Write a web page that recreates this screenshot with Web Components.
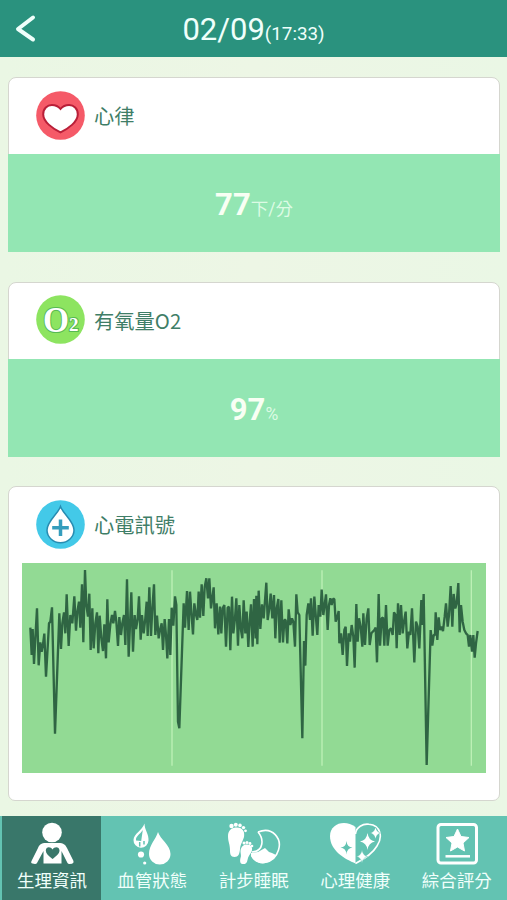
<!DOCTYPE html>
<html lang="zh-Hant">
<head>
<meta charset="utf-8">
<title>生理資訊</title>
<style>
	body {
		margin: 0;
		background: #ebf6e5;
		font-family: Roboto, "Noto Sans CJK TC", sans-serif;
	}
</style>
</head>
<body>
<health-app>
	<top-bar slot="top" date="02/09" time="(17:33)"></top-bar>
	<info-card label="心律">
		<health-icon slot="icon" name="heart"></health-icon>
		<value-panel value="77" unit="下/分"></value-panel>
	</info-card>
	<info-card label="有氧量O2">
		<health-icon slot="icon" name="oxygen"></health-icon>
		<value-panel value="97" unit="%"></value-panel>
	</info-card>
	<info-card label="心電訊號">
		<health-icon slot="icon" name="drop"></health-icon>
		<ecg-chart></ecg-chart>
	</info-card>
	<tab-bar slot="bottom">
		<tab-item label="生理資訊" icon="body" active></tab-item>
		<tab-item label="血管狀態" icon="blood"></tab-item>
		<tab-item label="計步睡眠" icon="sleep"></tab-item>
		<tab-item label="心理健康" icon="mind"></tab-item>
		<tab-item label="綜合評分" icon="score"></tab-item>
	</tab-bar>
</health-app>

<script>
const ICONS = {
	heart: `<svg viewBox="0 0 49 49">
		<circle cx="24.5" cy="24.5" r="24.3" fill="#f55a68"/>
		<path d="M24.5 41.3C17 37.8 7.2 31 7.2 23.2C7.2 17.4 11.3 14 15.9 14C19.5 14 22.5 15.5 24.5 18C26.5 15.5 29.5 14 33.1 14C37.7 14 41.8 17.4 41.8 23.2C41.8 31 32 37.8 24.5 41.3Z" fill="#fff" stroke="#b91f38" stroke-width="2"/>
	</svg>`,
	oxygen: `<svg viewBox="0 0 49 49">
		<circle cx="24.5" cy="24.5" r="24.3" fill="#8de460"/>
		<g font-family="Liberation Serif, serif" font-weight="bold" fill="#fff" stroke="#57b953" stroke-width="2" paint-order="stroke">
			<text x="7" y="36.5" font-size="35" textLength="26" lengthAdjust="spacingAndGlyphs">O</text>
			<text x="33" y="36" font-size="18" textLength="9.5" lengthAdjust="spacingAndGlyphs">2</text>
		</g>
	</svg>`,
	drop: `<svg viewBox="0 0 49 49">
		<circle cx="24.5" cy="24.5" r="24.3" fill="#43c9e8"/>
		<path d="M24.5 6.5C22 14 11 21 11 30A13.5 12.7 0 0 0 38 30C38 21 27 14 24.5 6.5Z" fill="#fff" stroke="#278cb1" stroke-width="1.5"/>
		<path d="M24.5 19.5V36M16.2 27.7H32.8" stroke="#349dbd" stroke-width="3.5"/>
	</svg>`,
	body: `<svg viewBox="0 0 54 44">
		<circle cx="27" cy="10.5" r="9.8"/>
		<path d="M21 21H33C39 21 40.5 23 42 26L48.5 39Q49 41 47 41.8L44.5 42Q43 42 42.5 41L36.5 29V41.5H18.5V29L12 41Q11.5 42 10 42L7.5 41.5Q5.5 41 6.5 39L13 26C14.5 22.5 16 21 21 21Z"/>
		<path d="M27.5 37C23.5 34 20.8 31.5 20.8 28.5C20.8 24.5 25.5 24 27.5 27.5C29.5 24 34.5 24.5 34.5 28.5C34.5 31.5 31.5 34 27.5 37Z" fill="#39776a"/>
	</svg>`,
	blood: `<svg viewBox="0 0 54 44">
		<path d="M33 10C35 17 45.5 23 45.5 32A10.7 10.5 0 0 1 24 32C24 23 31 17 33 10Z"/>
		<path d="M19.5 1.5C19.5 8 24 12 23.5 18.5A7.5 7.5 0 0 1 8.5 18C8.5 12 17.5 8 19.5 1.5Z"/>
		<path d="M17.8 8C15 12.5 10.5 14 11 18.5L16.2 19Z" fill="#63c3b2"/>
		<path d="M14.7 20V24.5M19 19V22.5" stroke="#63c3b2" stroke-width="1.5" fill="none"/>
		<circle cx="16" cy="32.5" r="3.1"/><circle cx="19.7" cy="41" r="1.6"/>
	</svg>`,
	sleep: `<svg viewBox="0 0 54 44">
		<path d="M1 14C1 8 5 5.5 10 5.5C16 5.5 18 10 17 15C15.5 20 13.5 22 13 27C12.5 32 11.5 35 7.5 35C3.5 35 3 32 3 28C3 22 1 20 1 14Z"/>
		<circle cx="4.5" cy="4" r="2.2"/><circle cx="8.8" cy="2.7" r="2"/><circle cx="13" cy="3.4" r="1.8"/><circle cx="16.5" cy="5.6" r="1.7"/><circle cx="18.5" cy="8.8" r="1.4"/>
		<path d="M13.5 29C14 24 17 22.500 20 22.500C24.500 22.500 26 26 24.500 30C23 32.500 21 34 20.500 38C20 41.500 17.500 42.500 15.500 42C12.500 41.500 13 38 13.500 36C14.500 33.500 13.500 32 13.500 29Z"/>
		<circle cx="17" cy="21" r="1.500"/><circle cx="20" cy="20.500" r="1.500"/><circle cx="23" cy="21.500" r="1.400"/><circle cx="25" cy="24" r="1.300"/>
		<path d="M31 10C46 4 55 17 51.500 28C47 43 29 44 24.500 33" fill="none" stroke="#fff" stroke-width="1.600"/>
		<path d="M31 10C37 17 37 29 25 30" fill="none" stroke="#fff" stroke-width="1.600"/>
		<path d="M24 31L31 30L38 26L42 30L45 31L49 33C43 44 29 44 24 34Z"/>
	</svg>`,
	mind: `<svg viewBox="0 0 54 44">
		<path d="M27.500 5V41.500C17 37 2 29 2 14C2 1.500 17 -3 27.500 5Z"/>
		<path d="M27.500 12C28 5 35 1.500 41 2.300C53 3.500 55 15 49 24C45 31 38 36 27.500 41.500" fill="none" stroke="#fff" stroke-width="1.600"/>
		<path d="M18.500 19Q19 25 24.500 25.500Q19 26 18.500 32.500Q18 26 12.500 25.500Q18 25 18.500 19Z" fill="#63c3b2"/>
		<path d="M39.500 11Q40.500 18.500 47 19.500Q40.500 20.500 39.500 28Q38.500 20.500 32 19.500Q38.500 18.500 39.500 11Z"/>
		<path d="M47.500 5Q48.500 10 52.500 11Q48.500 12 47.500 17Q46.500 12 42.500 11Q46.500 10 47.500 5Z" stroke="#63c3b2" stroke-width=".5"/>
		<path d="M34 28Q35 33.500 39.500 34.500Q35 35.500 34 41Q33 35.500 28.500 34.500Q33 33.500 34 28Z" stroke="#63c3b2" stroke-width=".5"/>
	</svg>`,
	score: `<svg viewBox="0 0 54 44">
		<rect x="8" y="2.500" width="38.500" height="38.500" rx="3" fill="none" stroke="#fff" stroke-width="3"/>
		<path d="M27.500 7L31 14.500L39 15.500L33 21L34.500 29L27.500 25L20.500 29L22 21L16 15.500L24 14.500Z" stroke="#fff" stroke-linejoin="round"/>
		<path d="M15.500 34.300H40" stroke="#fff" stroke-width="2.500"/>
	</svg>`,
};

// Each trace: x offset, then x,y pairs
const TRACES = [
	[0, "46,218 50,300 53,222 57,327 61,250 66,160 71,331 76,262 80,290 84,268 88,236 93,365 99,260 102,205 106,200 111,157 120,536 133,175 138,282 142,205 147,172 151,235 155,118 161,273 166,180 172,205 178,124 183,227 187,170 192,140 196,218 201,88 205,262 210,45 214,150 219,185 223,116 227,285 232,160 236,280 241,205 246,172 250,295 254,182 259,250 264,288 268,208 273,310 277,133 281,262 286,208 291,180 295,205 300,168 304,200 309,273 313,186 318,240 322,205 327,180 331,270 336,73 341,305 349,112 354,290 359,180 363,222 368,192 372,124 377,254 381,180 386,235 391,190 395,140 398,243 403,97 408,243 412,160 417,88 421,240 426,182 431,250 435,225 440,205 444,285 449,192 453,240 457,310 462,192 466,300 470,158 475,212"],
	[450, "30,124 34,150 39,500 43,520 56,145 60,218 66,108 71,225 75,110 79,170 84,238 88,145 93,180 97,195 101,110 105,188 110,88 115,183 119,97 124,70 129,130 133,70 138,160 146,97 150,220 155,145 160,238 165,155 169,235 173,160 178,150 183,275 188,158 192,155 196,286 201,125 205,235 210,190 214,130 219,272 223,150 228,225 232,250 236,136 241,235 245,170 250,276 254,200 258,148 263,275 267,132 272,250 274,122 277,268 281,107 286,222 291,148 296,190 304,83 308,195 313,160 317,116 322,190 327,120 331,250 335,160 340,132 344,263 349,136 354,262 358,195 362,195 367,265 371,163 376,210 381,190 385,200 390,275 394,118 398,172 403,180 412,550 417,258 421,332 425,180 430,145 435,195 438,130 443,242 448,125 453,190 457,240 461,150 466,185 470,104 475,180"],
	[930, "3,118 8,225 12,150 16,130 20,150 24,132 28,132 32,200 37,185 41,168 43,265 48,235 53,300 58,225 62,215 66,333 71,235 75,260 80,210 85,245 89,338 94,147 98,260 102,190 107,215 112,275 115,175 120,270 125,190 130,160 134,270 139,235 148,225 152,218 156,322 161,117 165,272 170,190 174,188 178,272 183,150 188,272 193,225 198,220 203,240 207,172 212,180 215,280 219,145 224,240 228,150 233,235 237,200 242,170 247,280 252,230 256,240 261,160 268,322 273,200 278,215 283,280 289,135 292,210 296,117 305,630 317,225 322,272 326,240 330,240 332,172 337,255 341,187 345,225 349,215 354,228 359,185 363,145 368,215 372,180 377,93 382,215 386,117 391,160 395,145 400,84 404,232 408,150 413,200 418,225 423,235 428,240 432,275 436,240 441,290 445,240 449,308 453,265 458,228"],
];

class BaseElement extends HTMLElement {
	constructor() {
		super();
		this.attachShadow({ mode: "open" });
	}

	connectedCallback() {
		this.shadowRoot.innerHTML = this.template();
	}

	attr(name) {
		return this.getAttribute(name) ?? "";
	}
}

class HealthApp extends BaseElement {
	template() {
		return `<style>
			:host {
				display: flex;
				flex-direction: column;
				height: 900px;
				overflow: hidden;
				background: linear-gradient(90deg, #eaf7e4, #edf6e5 50%, #eaf7e5);
			}
			main {
				flex: 1;
				min-height: 0;
				display: flex;
				flex-direction: column;
				gap: 29.5px;
				padding: 20px 7px 0 8px;
			}
		</style>
		<slot name="top"></slot>
		<main><slot></slot></main>
		<slot name="bottom"></slot>`;
	}
}

class TopBar extends BaseElement {
	template() {
		return `<style>
			:host {
				display: grid;
				grid-template-columns: 50px 1fr 50px;
				align-items: center;
				height: 57px;
				background: #2a927e;
				color: #effffb;
			}
			svg {
				width: 24px;
				height: 30px;
				margin-left: 14px;
			}
			h1 {
				margin: 0;
				padding-top: 6px;
				text-align: center;
				font-size: 31px;
				line-height: 36px;
				font-weight: 400;
				white-space: nowrap;
			}
			small {
				font-size: 18.8px;
			}
		</style>
		<svg viewBox="0 0 24 30"><path d="M19 3.5L4 15L19 25.5" fill="none" stroke="currentColor" stroke-width="4" stroke-linecap="round" stroke-linejoin="round"/></svg>
		<h1>${this.attr("date")}<small>${this.attr("time")}</small></h1>`;
	}
}

class InfoCard extends BaseElement {
	template() {
		return `<style>
			:host {
				display: block;
				flex: none;
				box-sizing: border-box;
				border: 1px solid #d5d6cf;
				border-radius: 8px 8px 7px 7px;
				background: #fff;
			}
			:host(:not(:last-of-type)) {
				border-bottom-left-radius: 0;
				border-bottom-right-radius: 0;
			}
			header {
				display: flex;
				align-items: center;
				gap: 9px;
				box-sizing: border-box;
				height: 76px;
				padding: 0 0 2px 27px;
				color: #3f7e67;
				font: 20.3px "Noto Sans CJK TC", sans-serif;
			}
		</style>
		<header><slot name="icon"></slot><span>${this.attr("label")}</span></header>
		<slot></slot>`;
	}
}

class HealthIcon extends BaseElement {
	template() {
		return `<style>
			:host {
				display: block;
				width: 49px;
				height: 49px;
			}
			svg {
				display: block;
			}
		</style>
		${ICONS[this.attr("name")]}`;
	}
}

class ValuePanel extends BaseElement {
	template() {
		return `<style>
			:host {
				display: flex;
				justify-content: center;
				align-items: baseline;
				box-sizing: border-box;
				height: 98px;
				margin: 0 -1px -1px;
				padding-top: 33px;
				background: #93e6b3;
				color: #f8fff4;
			}
			b {
				font-size: 31px;
				line-height: 36px;
			}
			span {
				font-size: 17.5px;
				line-height: 20px;
				color: #dcfbe4;
			}
		</style>
		<b>${this.attr("value")}</b><span>${this.attr("unit")}</span>`;
	}
}

class EcgChart extends BaseElement {
	template() {
		const points = TRACES.flatMap(([offset, trace]) =>
			trace.split(" ").map((pair) => {
				const [x, y] = pair.split(",").map(Number);
				return `${x + offset},${y}`;
			})
		).join(" ");
		return `<style>
			:host {
				display: block;
				padding: 0 13px 27px;
			}
			svg {
				display: block;
				width: 464px;
				height: 210px;
				background: #92da94;
			}
		</style>
		<svg viewBox="21 24 1392 630">
			<path d="M471 46V632M921 46V632M1369 46V632" stroke="#bdf0b6" stroke-width="4"/>
			<polyline points="${points}" fill="none" stroke="#2f6543" stroke-width="7" stroke-linejoin="bevel"/>
		</svg>`;
	}
}

class TabBar extends BaseElement {
	template() {
		return `<style>
			:host {
				display: grid;
				grid-template-columns: 99px repeat(4, 1fr);
				flex: none;
				height: 84px;
				padding-left: 2px;
				background: #63c3b2;
			}
		</style>
		<slot></slot>`;
	}
}

class TabItem extends BaseElement {
	template() {
		return `<style>
			:host {
				display: flex;
				flex-direction: column;
				align-items: center;
				padding: 6px 0 0 1px;
				color: #f0fffb;
				font-size: 17.5px;
				line-height: 25px;
				white-space: nowrap;
			}
			:host([active]) {
				background: #39776a;
			}
			svg {
				width: 54px;
				height: 44px;
				margin-bottom: 3px;
				fill: #fff;
			}
		</style>
		${ICONS[this.attr("icon")]}
		<span>${this.attr("label")}</span>`;
	}
}

customElements.define("health-app", HealthApp);
customElements.define("top-bar", TopBar);
customElements.define("info-card", InfoCard);
customElements.define("health-icon", HealthIcon);
customElements.define("value-panel", ValuePanel);
customElements.define("ecg-chart", EcgChart);
customElements.define("tab-bar", TabBar);
customElements.define("tab-item", TabItem);
</script>
</body>
</html>
